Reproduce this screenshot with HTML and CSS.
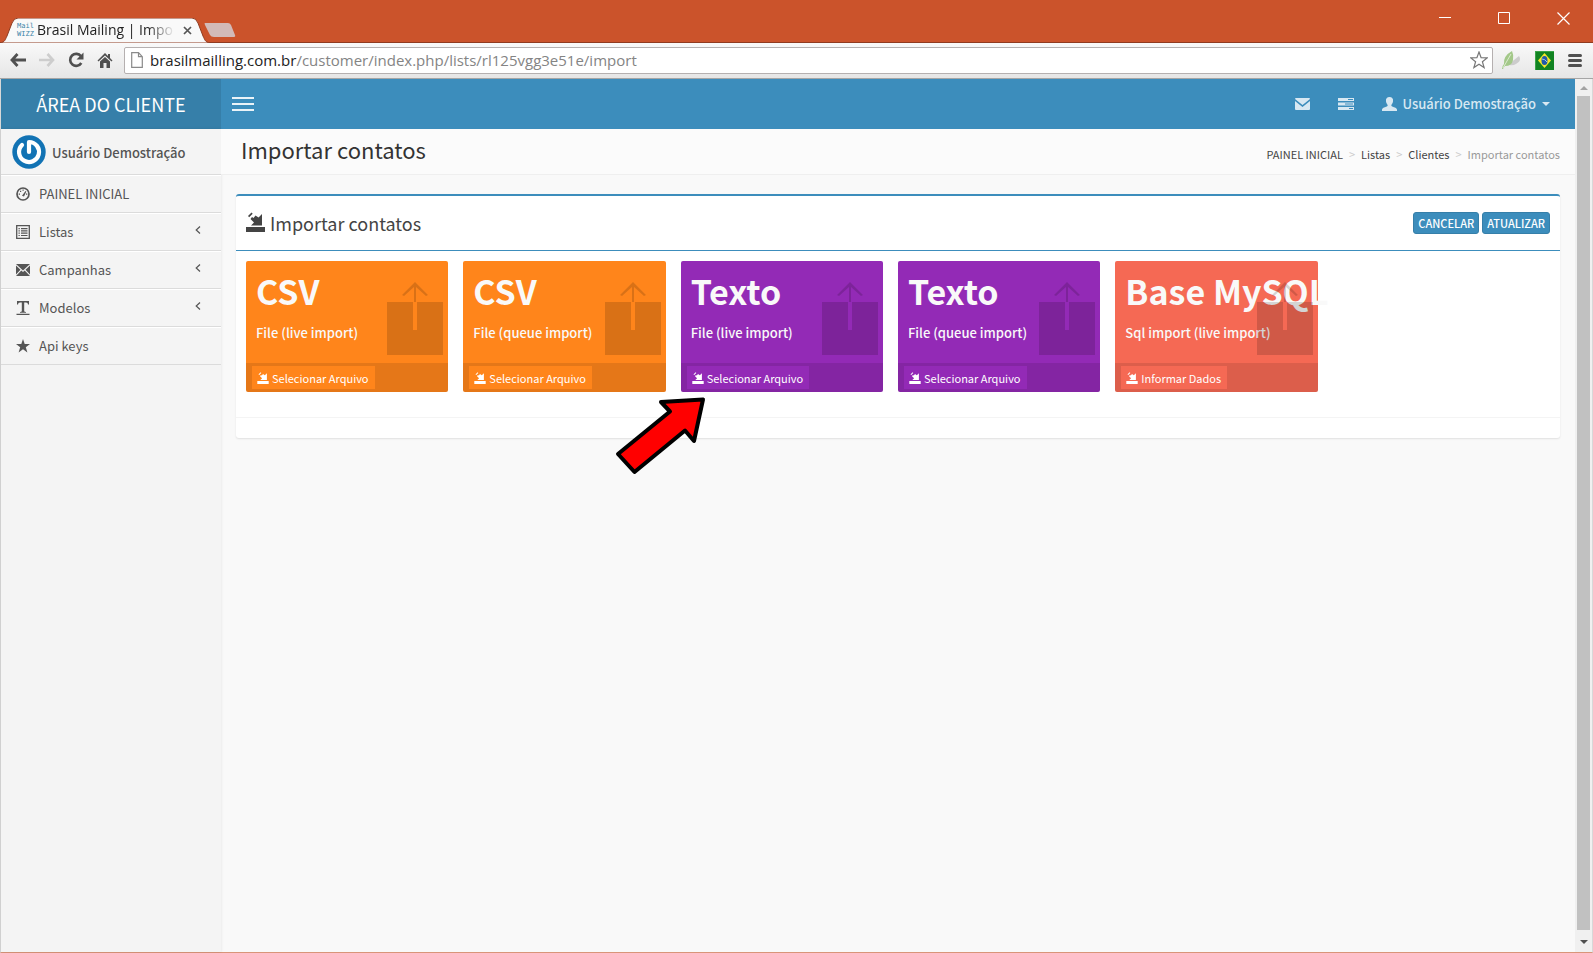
FILE: index.html
```html
<!DOCTYPE html>
<html lang="pt-BR">
<head>
<meta charset="utf-8">
<title>Brasil Mailing | Importar contatos</title>
<link rel="stylesheet" href="styles.css">
</head>
<body>
<svg class="defs" aria-hidden="true">
  <symbol id="import" viewBox="0 0 19 20">
    <path d="M0 15h19v5H0z"/>
    <path d="M16 2v11.500H5l3-3L4.500 7l1.500-2 1.500 1 2-2.500 3 2z"/>
    <path d="M2 4l3.500-3.500 1.200 1.200-3.500 3.500z"/>
  </symbol>
  <symbol id="export" viewBox="0 0 56 73">
    <path fill-rule="evenodd" d="M0 20h56v53H0zM26 20v28h4V20z"/>
    <path d="M27 20V5L17 14l-2-1L28 0l13 13-2 1L29 5v15z"/>
  </symbol>
  <symbol id="chevron" viewBox="0 0 6 8"><path d="M5 .5L1.200 4 5 7.500" fill="none" stroke="currentColor" stroke-width="1.200"/></symbol>
</svg>

<div class="titlebar">
  <svg class="tab-shape" viewBox="0 0 240 25" aria-hidden="true">
    <path d="M0 25C5 24 5 22 7 18L12 5Q14 0 18 0H192Q196 0 198 5L203 18C205 22 205 24 210 25Z" fill="#f9f9f9" stroke="#8f3b20" stroke-width="1"/>
    <path d="M205 5H228Q230 5 231 7L235 17Q236 19 233 19H214Q211 19 210 17L205 7Q204 5 205 5Z" fill="#d2bab8"/>
  </svg>
  <div class="tab">
    <span class="favicon">Mail<br>WIZZ</span>
    <span class="tab-title">Brasil Mailing | Impo</span>
    <button class="plain tab-close" aria-label="Fechar guia"><svg width="9" height="9" viewBox="0 0 9 9"><path d="M1 1l7 7M8 1L1 8" stroke="#555" stroke-width="1.700"/></svg></button>
  </div>
  <div class="window-buttons">
    <button class="plain" aria-label="Minimizar"><svg width="13" height="13" viewBox="0 0 13 13"><path d="M0 5.500h12" stroke="#fff"/></svg></button>
    <button class="plain" aria-label="Maximizar"><svg width="13" height="13" viewBox="0 0 13 13"><path d="M.5.5h11v11H.5z" fill="none" stroke="#fff"/></svg></button>
    <button class="plain" aria-label="Fechar"><svg width="13" height="13" viewBox="0 0 13 13"><path d="M.5.5l12 12M12.500.5l-12 12" stroke="#fff" stroke-width="1.200"/></svg></button>
  </div>
</div>

<div class="toolbar">
  <button class="plain" aria-label="Voltar"><svg width="16" height="14" viewBox="0 0 16 14"><path d="M7.500 1L2 7l5.500 6M2 7h14" fill="none" stroke="#505050" stroke-width="2.800"/></svg></button>
  <button class="plain" aria-label="Avançar"><svg width="16" height="14" viewBox="0 0 16 14"><path d="M8.500 1L14 7l-5.500 6M14 7H0" fill="none" stroke="#cdcdcd" stroke-width="2.600"/></svg></button>
  <button class="plain" aria-label="Recarregar"><svg width="16" height="16" viewBox="0 0 16 16"><path d="M13 4.300A6 6 0 1 0 13.300 11" fill="none" stroke="#505050" stroke-width="2.600"/><path d="M15.500.5v7h-7z" fill="#505050"/></svg></button>
  <button class="plain" aria-label="Início"><svg width="16" height="16" viewBox="0 0 16 16"><path d="M8 1L.5 8.500l1 1L8 3.500l6.500 6 1-1L13 6V2h-2v2zM3 9.500l5-4.500 5 4.500V16H9.500v-5h-3v5H3z" fill="#505050"/></svg></button>
  <div class="address">
    <svg width="12" height="16" viewBox="0 0 12 16"><path d="M.7.700h6.800l3.800 4v10.600H.7zM7.500.7v4h3.800" fill="#fff" stroke="#8a8a8a" stroke-width="1.200"/></svg>
    <label class="host" for="url">brasilmailling.com.br</label><input id="url" class="path" type="text" value="/customer/index.php/lists/rl125vgg3e51e/import">
    <button class="plain" aria-label="Favorito"><svg width="18" height="18" viewBox="0 0 18 18"><path d="M9 1l2.100 5.700 6.100.2-4.800 3.800 1.700 5.900L9 13.200l-5.100 3.400 1.700-5.900L.8 6.900l6.100-.2z" fill="#fff" stroke="#777" stroke-width="1.200"/></svg></button>
  </div>
  <div class="extensions">
    <button class="plain" aria-label="Folha"><svg width="20" height="20" viewBox="0 0 20 20"><path d="M8 14l10-8q3 5-3 8-3 2-7 1z" fill="#ccc"/><path d="M1 19q0-3 2-5Q2 6 11 1q2 4 1 9-1 6-8 6-1 1-2 3z" fill="#a3c889"/><path d="M2 18L10 4" stroke="#dcebcf" stroke-width="1"/></svg></button>
    <button class="plain" aria-label="Brasil"><svg width="19" height="19" viewBox="0 0 19 19"><path d="M0 0h19v19H0z" fill="#118321"/><path d="M0 19V0h19" fill="none" stroke="#3aa348" stroke-width="2"/><path d="M9.500 2L16 9.500 9.500 17 3 9.500z" fill="#f3e62c"/><ellipse cx="9.500" cy="9.500" rx="3" ry="4.500" fill="#2159a8"/><path d="M7 8q3 0 5 3" stroke="#9ec4e8" fill="none"/></svg></button>
    <button class="plain" aria-label="Menu"><svg width="14" height="13" viewBox="0 0 14 13"><path d="M1.500 1.500h11M1.500 6.500h11M1.500 11.500h11" stroke="#505050" stroke-width="3" stroke-linecap="round"/></svg></button>
  </div>
</div>

<div class="viewport">
  <div class="app">
    <header class="topbar">
      <a class="brand" href="#">ÁREA DO CLIENTE</a>
      <button class="plain toggle" aria-label="Alternar menu"><svg width="22" height="14" viewBox="0 0 22 14"><path d="M0 1h22M0 7h22M0 13h22" stroke="#eaf3f8" stroke-width="2"/></svg></button>
      <nav class="topnav">
        <a href="#" aria-label="Mensagens"><svg width="15" height="12" viewBox="0 0 15 12"><path d="M0 1q0-1 1-1h13q1 0 1 1L7.500 7zM0 3l7.500 6L15 3v8q0 1-1 1H1q-1 0-1-1z"/></svg></a>
        <a href="#" aria-label="Tarefas"><svg width="16" height="12" viewBox="0 0 16 12"><path fill-rule="evenodd" d="M0 0h16v3H0zM10 1h5v1h-5zM0 4.500h16v3H0zM7 5.500h8v1H7zM0 9h16v3H0zM11 10h4v1h-4z"/></svg></a>
        <a class="account" href="#"><svg width="15" height="14" viewBox="0 0 15 14"><path d="M7.500 0C10 0 11.500 1.500 11 4.500 10.800 6.500 9.500 7 9.300 8.500c0 1.500 5.200 1.500 5.700 4V14H0v-1.500c.5-2.500 5.700-2.500 5.700-4C5.500 7 4.200 6.500 4 4.500 3.500 1.500 5 0 7.500 0z"/></svg><span>Usuário Demostração</span><svg width="8" height="4" viewBox="0 0 8 4"><path d="M0 0h8L4 4z"/></svg></a>
      </nav>
    </header>
    <div class="columns">
      <aside class="sidebar">
        <div class="user">
          <svg width="34" height="34" viewBox="0 0 34 34"><circle cx="17" cy="17" r="16.700" fill="#1273b4"/><path d="M17 17V7A10 10 0 1 1 10 9.900" fill="none" stroke="#fff" stroke-width="4.200" stroke-linecap="round" stroke-linejoin="round"/></svg>
          <span>Usuário Demostração</span>
        </div>
        <nav class="menu">
          <a href="#"><svg width="14" height="14" viewBox="0 0 14 14"><circle cx="7" cy="7" r="6" fill="none" stroke="currentColor" stroke-width="1.700"/><path d="M6 8.800L9.500 4l.8.500L8 9.500zM2.700 6.500h1.300v1.200H2.700zM4 3.700h1.200v1.200H4zM6.500 2.600h1.200v1.200H6.500zM10 6.500h1.300v1.200H10z"/></svg><span>PAINEL INICIAL</span></a>
          <a href="#"><svg width="14" height="14" viewBox="0 0 14 14"><path d="M.7.700h12.600v12.600H.7z" fill="none" stroke="currentColor" stroke-width="1.300"/><path d="M2.500 3h1.300v1.200H2.500zM5 3h6.500v1.200H5zM2.500 5.300h1.300v1.200H2.500zM5 5.300h6.500v1.200H5zM2.500 7.600h1.300v1.200H2.500zM5 7.600h6.500v1.200H5zM2.500 9.900h1.300v1.200H2.500zM5 9.900h6.500v1.200H5z"/></svg><span>Listas</span><svg class="more" width="6" height="8"><use href="#chevron"/></svg></a>
          <a href="#"><svg width="14" height="12" viewBox="0 0 14 12"><path d="M0 0h14L7 6.500zM0 1.500l4.500 4.300L0 10.500zM14 1.500v9L9.500 5.800zM0 12l5.300-5.500L7 8l1.700-1.500L14 12z"/></svg><span>Campanhas</span><svg class="more" width="6" height="8"><use href="#chevron"/></svg></a>
          <a href="#"><svg width="14" height="14" viewBox="0 0 14 14"><path d="M1 0h12v3.500h-1Q12 1.500 10 1.500H8.200V10Q8.200 11 10 11v.800H4V11q1.800 0 1.800-1V1.500H4Q2 1.500 2 3.500H1zM.5 12.800h13V14H.5z"/></svg><span>Modelos</span><svg class="more" width="6" height="8"><use href="#chevron"/></svg></a>
          <a href="#"><svg width="14" height="14" viewBox="0 0 14 14"><path d="M7 0l1.700 5H14L9.800 8.200l1.600 5.300L7 10.300l-4.400 3.200 1.600-5.300L0 5h5.300z"/></svg><span>Api keys</span></a>
        </nav>
      </aside>
      <main class="content">
        <div class="content-header">
          <h1>Importar contatos</h1>
          <nav class="breadcrumb"><a href="#">PAINEL INICIAL</a><i>&gt;</i><a href="#">Listas</a><i>&gt;</i><a href="#">Clientes</a><i>&gt;</i><span>Importar contatos</span></nav>
        </div>
        <section class="box">
          <div class="box-header">
            <h2><svg width="19" height="20"><use href="#import"/></svg>Importar contatos</h2>
            <div class="actions"><button class="btn">CANCELAR</button><button class="btn">ATUALIZAR</button></div>
          </div>
          <div class="cards">
            <article class="card orange"><div class="inner"><h3>CSV</h3><p>File (live import)</p></div><svg class="mark" width="56" height="73"><use href="#export"/></svg><div class="foot"><button><svg width="12" height="12"><use href="#import"/></svg>Selecionar Arquivo</button></div></article>
            <article class="card orange"><div class="inner"><h3>CSV</h3><p>File (queue import)</p></div><svg class="mark" width="56" height="73"><use href="#export"/></svg><div class="foot"><button><svg width="12" height="12"><use href="#import"/></svg>Selecionar Arquivo</button></div></article>
            <article class="card purple"><div class="inner"><h3>Texto</h3><p>File (live import)</p></div><svg class="mark" width="56" height="73"><use href="#export"/></svg><div class="foot"><button><svg width="12" height="12"><use href="#import"/></svg>Selecionar Arquivo</button></div>
              <svg class="pointer" width="92" height="80" viewBox="0 0 92 80"><path d="M88 4.500L46 7l9 9.500L3 59l16.500 18L70 35.500 79 46z" fill="#f00" stroke="#000" stroke-width="4" stroke-linejoin="round"/></svg></article>
            <article class="card purple"><div class="inner"><h3>Texto</h3><p>File (queue import)</p></div><svg class="mark" width="56" height="73"><use href="#export"/></svg><div class="foot"><button><svg width="12" height="12"><use href="#import"/></svg>Selecionar Arquivo</button></div></article>
            <article class="card red"><div class="inner"><h3>Base MySQL</h3><p>Sql import (live import)</p></div><svg class="mark" width="56" height="73"><use href="#export"/></svg><div class="foot"><button><svg width="12" height="12"><use href="#import"/></svg>Informar Dados</button></div></article>
          </div>
          <div class="box-footer"></div>
        </section>
      </main>
    </div>
  </div>
  <div class="scrollbar">
    <svg width="8" height="4" viewBox="0 0 8 4"><path d="M0 4l4-4 4 4z" fill="#a3a3a3"/></svg>
    <div class="thumb"></div>
    <svg width="8" height="4" viewBox="0 0 8 4"><path d="M0 0h8L4 4z" fill="#505050"/></svg>
  </div>
</div>
</body>
</html>
```
FILE: styles.css
```css
* { box-sizing: border-box; }
body {
  margin: 0;
  height: 100vh;
  display: flex;
  flex-direction: column;
  overflow: hidden;
  font-family: "Noto Sans CJK SC", "Open Sans", sans-serif;
  font-size: 13px;
  line-height: 20px;
  color: #333;
}
a { color: inherit; text-decoration: none; }
h1, h2, h3, p { margin: 0; font-weight: 400; }
svg { display: block; flex: none; fill: currentColor; }
button { font-family: inherit; cursor: pointer; }
.defs { position: absolute; width: 0; height: 0; }
.plain { display: flex; padding: 0; border: 0; background: none; }

/* Browser window */
.titlebar {
  position: relative;
  flex: none;
  display: flex;
  justify-content: space-between;
  height: 43px;
  background: #cb532b;
  border-bottom: 1px solid #8f3b20;
}
.tab-shape { position: absolute; left: 0; bottom: -1px; width: 240px; height: 25px; }
.tab {
  position: relative;
  display: flex;
  align-items: center;
  align-self: flex-end;
  width: 205px;
  height: 24px;
  padding-left: 17px;
  font-family: "Open Sans", sans-serif;
  color: #222;
}
.favicon { width: 20px; font: 400 7px/8px "DejaVu Sans Mono", monospace; color: #3a84a8; }
.tab-title {
  width: 138px;
  white-space: nowrap;
  font-size: 14px;
  mask-image: linear-gradient(90deg, #000 80%, transparent);
}
.tab-close { margin-left: 8px; }
.window-buttons { display: flex; gap: 46px; padding: 12px 23px 0 0; align-items: flex-start; }
.toolbar {
  flex: none;
  display: flex;
  align-items: center;
  gap: 13px;
  height: 36px;
  padding: 0 11px 1px 10px;
  background: linear-gradient(#f9f9f9, #e6e6e6);
  border-bottom: 1px solid #a5a5a5;
}
.address {
  flex: 1;
  display: flex;
  align-items: center;
  height: 27px;
  margin-left: -2px;
  padding: 0 4px 0 6px;
  background: #fff;
  border: 1px solid #b5b0b0;
  border-radius: 2px;
  font-family: "Open Sans", sans-serif;
  font-size: 15px;
}
.host { margin-left: 7px; color: #222; }
.path { flex: 1; min-width: 0; padding: 0; border: 0; outline: 0; background: none; font: inherit; color: #848484; }
.extensions { display: flex; align-items: center; gap: 14px; margin-left: -5px; }
.viewport {
  flex: 1;
  min-height: 0;
  display: flex;
  border: solid #d8d8d8;
  border-width: 0 1px;
  border-bottom: 1px solid #d99579;
}
.scrollbar {
  width: 17px;
  display: flex;
  flex-direction: column;
  align-items: center;
  gap: 6px;
  padding: 7px 0 8px;
  background: #f0f0f0;
}
.thumb { flex: 1; width: 13px; margin-bottom: 4px; background: #c1c1c1; }

/* Application */
.app { flex: 1; min-width: 0; display: flex; flex-direction: column; background: #f9f9f9; }
.topbar { display: flex; align-items: center; height: 50px; background: #3c8dbc; color: #d8e8f2; }
.brand {
  width: 220px;
  line-height: 50px;
  text-align: center;
  font-size: 18px;
  background: #367fa9;
  color: #fff;
}
.toggle { margin-left: 11px; }
.topnav { display: flex; align-items: center; gap: 28px; margin-left: auto; padding-right: 25px; font-weight: 500; }
.account { display: flex; align-items: center; gap: 6px; }
.columns { flex: 1; display: flex; }
.sidebar { width: 220px; background: #f4f4f4; box-shadow: 0 0 3px rgba(0, 0, 0, .1); color: #555; }
.user {
  display: flex;
  align-items: center;
  gap: 6px;
  height: 46px;
  padding-left: 11px;
  border-bottom: 1px solid #dbdbdb;
  font-weight: 500;
}
.user span { padding-top: 2px; }
.menu a {
  display: flex;
  align-items: center;
  gap: 9px;
  height: 38px;
  padding: 0 20px 0 15px;
  border-top: 1px solid #fff;
  border-bottom: 1px solid #dbdbdb;
}
.menu .more { margin: 0 0 4px auto; }
.content { flex: 1; min-width: 0; }
.content-header {
  display: flex;
  align-items: center;
  justify-content: space-between;
  height: 46px;
  padding: 0 15px 0 20px;
  background: #fbfbfb;
  border-bottom: 1px solid #efefef;
}
h1 { padding-bottom: 6px; font-size: 22px; line-height: 26px; color: #333; }
.breadcrumb { display: flex; gap: 6px; padding-top: 4px; font-size: 11px; color: #444; }
.breadcrumb i { font-style: normal; color: #ccc; }
.breadcrumb span { color: #999; }
.box {
  margin: 19px 15px 0;
  background: #fff;
  border-top: 2px solid #3c8dbc;
  border-radius: 3px;
  box-shadow: 0 1px 2px rgba(0, 0, 0, .1);
}
.box-header {
  display: flex;
  align-items: center;
  justify-content: space-between;
  height: 55px;
  padding: 0 10px;
  border-bottom: 1px solid #3c8dbc;
}
h2 { display: flex; align-items: center; gap: 5px; font-size: 18px; color: #444; }
h2 svg { margin-bottom: 2px; }
.actions { display: flex; gap: 3px; }
.btn {
  height: 22px;
  padding: 0 4px;
  font-size: 11px;
  line-height: 18px;
  font-weight: 500;
  color: #fff;
  background: #3c8dbc;
  border: 1px solid #367fa9;
  border-radius: 3px;
}
.cards { display: grid; grid-template-columns: repeat(6, minmax(0, 1fr)); padding: 10px 10px 25px; }
.card { position: relative; margin-right: 15px; border-radius: 2px; color: #f9f9f9; }
.orange { background: #ff851b; }
.purple { background: #932ab6; }
.red { background: #f56954; }
.inner { height: 102px; padding: 10px; white-space: nowrap; }
h3 { font-size: 34px; line-height: 40px; font-weight: 700; }
.inner p { margin-top: 12px; font-size: 13px; font-weight: 500; }
.mark { position: absolute; right: 5px; top: 21px; color: rgba(0, 0, 0, .15); }
.foot { display: flex; height: 29px; padding: 3px 6px; background: rgba(0, 0, 0, .1); border-radius: 0 0 2px 2px; }
.foot button {
  display: flex;
  align-items: center;
  gap: 3px;
  padding: 0 6px 0 5px;
  border: 0;
  font-size: 11px;
  font-weight: 400;
  color: #fff;
}
.orange button { background: #ff851b; }
.purple button { background: #932ab6; }
.red button { background: #f56954; }
.pointer { position: absolute; left: -66px; top: 134px; z-index: 1; }
.box-footer { height: 21px; border-top: 1px solid #f4f4f4; }
```
